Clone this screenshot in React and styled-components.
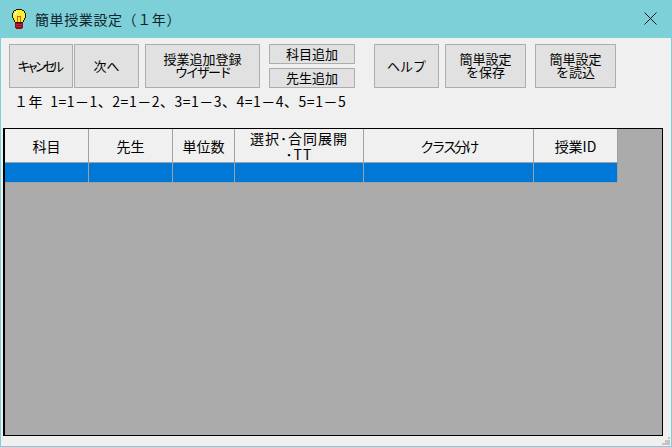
import React from "react";
import styled, { createGlobalStyle } from "styled-components";

const GlobalStyle = createGlobalStyle`
  html, body { margin: 0; padding: 0; background: #f0f0f0; }
  body { font-family: "Noto Sans CJK JP", "Liberation Sans", sans-serif; color: #000; }
`;

const COLUMNS = [
  { label: "科目", width: 84 },
  { label: "先生", width: 84 },
  { label: "単位数", width: 62 },
  { label: <>選択･合同展開<br />･TT</>, width: 129, spacing: 1 },
  { label: "クラス分け", width: 170, spacing: -2.6 },
  { label: "授業ID", width: 84 },
];

const Window = styled.div`
  position: relative;
  box-sizing: border-box;
  width: 672px;
  height: 447px;
  display: flex;
  flex-direction: column;
  background: #f0f0f0;
  border: solid #7dd0d8;
  border-width: 0 1px 1px 1px;
  overflow: hidden;
`;

const TitleBar = styled.div`
  flex: none;
  height: 38px;
  margin: 0 -1px;
  display: flex;
  align-items: center;
  padding: 0 10px 1px;
  box-sizing: border-box;
  background: #7dd0d8;
`;

const Title = styled.span`
  margin-left: 7px;
  font-size: 14px;
  letter-spacing: 0.6px;
  color: #10242c;
`;

const CloseButton = styled.span`
  margin-left: auto;
  margin-right: 5px;
  display: flex;
`;

const Toolbar = styled.div`
  display: flex;
  align-items: stretch;
  height: 44px;
  margin: 6px 0 0 8px;
`;

const Button = styled.div`
  box-sizing: border-box;
  width: ${(p) => p.$width}px;
  margin-left: ${(p) => p.$gap || 0}px;
  padding: 0 ${(p) => (p.$kana ? 5 : 0)}px 2px 0;
  display: flex;
  align-items: center;
  justify-content: center;
  text-align: center;
  background: #e1e1e1;
  border: 1px solid #adadad;
  font-size: 13px;
  letter-spacing: ${(p) => p.$kana || 0}px;
  line-height: 13px;
  white-space: nowrap;
`;

const Narrow = styled.span`
  letter-spacing: -2px;
`;

const ButtonStack = styled.div`
  display: flex;
  flex-direction: column;
  justify-content: space-between;
  margin-left: ${(p) => p.$gap}px;
`;

const SmallButton = styled(Button)`
  height: 20px;
`;

const Info = styled.div`
  margin: 5px 0 0 13px;
  height: 18px;
  font-size: 14px;
  letter-spacing: 0.5px;
  line-height: 16px;
  white-space: pre;
`;

const Grid = styled.div`
  flex: 1;
  margin: 17px 8px 10px 2px;
  box-sizing: border-box;
  border: 1px solid #000;
  border-left-width: 2px;
  background: #ababab;
`;

const Row = styled.div`
  display: flex;
  width: max-content;
`;

const HeaderCell = styled.div`
  box-sizing: border-box;
  width: ${(p) => p.$width}px;
  height: 34px;
  display: flex;
  align-items: center;
  justify-content: center;
  text-align: center;
  background: #f0f0f0;
  border: solid #a0a0a0;
  border-width: 0 1px 1px 0;
  font-size: 14px;
  letter-spacing: ${(p) => p.$spacing || 0}px;
  line-height: 16px;
`;

const DataCell = styled.div`
  box-sizing: border-box;
  width: ${(p) => p.$width}px;
  height: 20px;
  background: #0078d7;
  border: solid #a0a0a0;
  border-width: 0 1px 1px 0;
`;

const Grip = styled.svg`
  position: absolute;
  right: 0;
  bottom: 0;
`;

const BulbIcon = () => (
  <svg width="18" height="22" viewBox="0 0 18 22" shapeRendering="crispEdges">
    <path d="M6 1h6v1h2v1h1v2h1v5h-1v2h-1v2h-1v2H5v-2H4v-2H3v-2H2V5h1V3h1V2h2z" fill="#1a1a00" />
    <path d="M6 2h6v1h2v2h1v5h-1v2h-1v2H5v-2H4v-2H3V5h1V3h2z" fill="#ffee33" />
    <path d="M5 4h3v1H6v2H5z" fill="#ffffff" />
    <path d="M7 8h4v6h-1V9H8v5H7z" fill="#d05a10" />
    <path d="M5 15h8v5h-1v1H6v-1H5z" fill="#8a1020" />
    <path d="M6 16h6v1H6zM6 18h6v1H6z" fill="#d02030" />
  </svg>
);

const CloseIcon = () => (
  <svg width="13" height="13" viewBox="0 0 13 13">
    <path d="M0.5 0.5L12.5 12.5M12.5 0.5L0.5 12.5" stroke="#1a1a1a" strokeWidth="1" fill="none" />
  </svg>
);

export default function App() {
  return (
    <>
      <GlobalStyle />
      <Window>
        <TitleBar>
          <BulbIcon />
          <Title>簡単授業設定（１年）</Title>
          <CloseButton><CloseIcon /></CloseButton>
        </TitleBar>
        <Toolbar>
          <Button $width={64} $kana={-4.5}>キャンセル</Button>
          <Button $width={65} $gap={1}>次へ</Button>
          <Button $width={115} $gap={6}>
            <span>授業追加登録<br /><Narrow>ウイザード</Narrow></span>
          </Button>
          <ButtonStack $gap={9}>
            <SmallButton $width={86}>科目追加</SmallButton>
            <SmallButton $width={86}>先生追加</SmallButton>
          </ButtonStack>
          <Button $width={65} $gap={19}>ヘルプ</Button>
          <Button $width={81} $gap={6}>簡単設定<br />を保存</Button>
          <Button $width={81} $gap={9}>簡単設定<br />を読込</Button>
        </Toolbar>
        <Info>１年  1=1－1、2=1－2、3=1－3、4=1－4、5=1－5</Info>
        <Grid>
          <Row>
            {COLUMNS.map((c, i) => (
              <HeaderCell key={i} $width={c.width} $spacing={c.spacing}>{c.label}</HeaderCell>
            ))}
          </Row>
          <Row>
            {COLUMNS.map((c, i) => (
              <DataCell key={i} $width={c.width} />
            ))}
          </Row>
        </Grid>
        <Grip width="10" height="10" viewBox="0 0 10 10" shapeRendering="crispEdges">
          <path d="M7 1h2v2H7zM4 4h3v3H4zM7 4h2v3H7zM1 7h3v2H1zM4 7h3v2H4zM7 7h2v2H7z" fill="#c4c4c4" />
        </Grip>
      </Window>
    </>
  );
}
